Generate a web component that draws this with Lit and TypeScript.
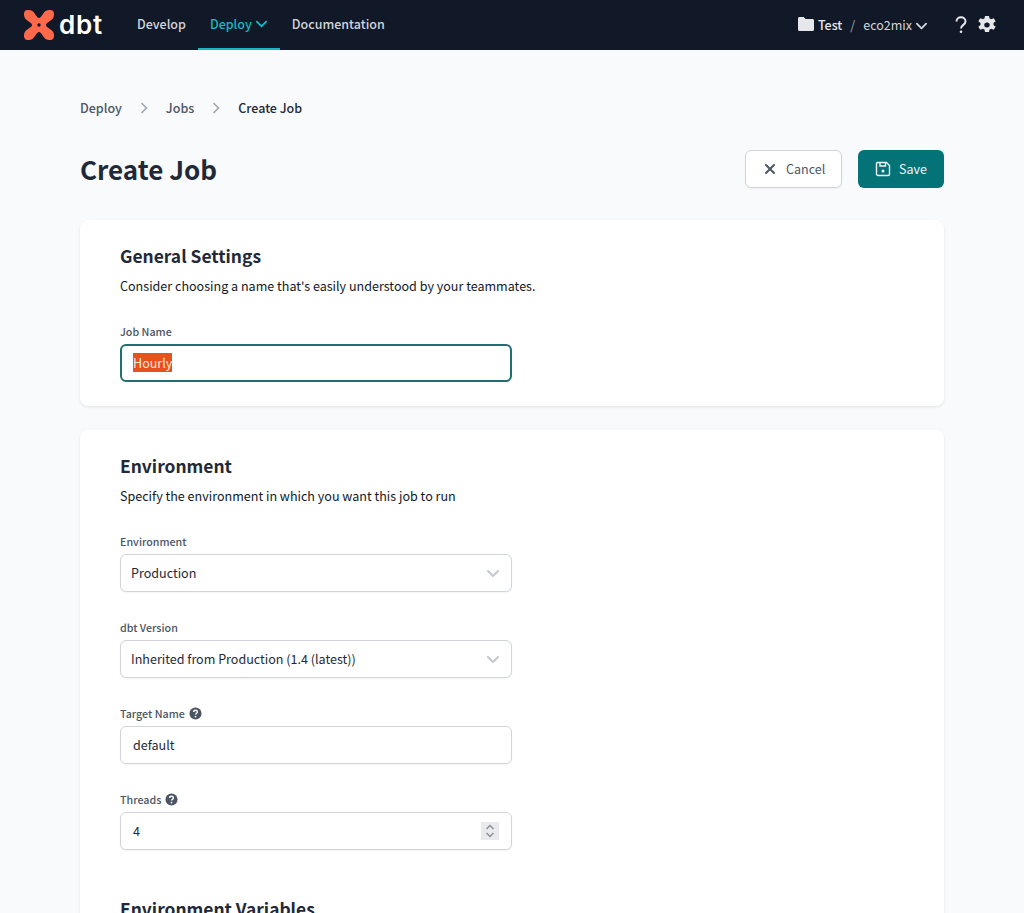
import { LitElement, html, css, svg } from 'lit';
import { customElement } from 'lit/decorators.js';

const chevronDown = svg`<path d="M2 5l5 5 5-5" fill="none" stroke="currentColor" stroke-width="2" stroke-linecap="round" stroke-linejoin="round"/>`;

const crumbChevron = html`<svg viewBox="0 0 8 12"><path d="M1.500 1l5 5-5 5" fill="none" stroke="currentColor" stroke-width="1.500"/></svg>`;

const helpDot = html`<svg class="help-dot" viewBox="0 0 14 14" width="13" height="13">
  <circle cx="7" cy="7" r="6.5" fill="#4b5563"/>
  <path d="M5 5.400C5 4.200 5.900 3.500 7 3.500s2 .7 2 1.800c0 1.500-2 1.500-2 2.900" fill="none" stroke="#fff" stroke-width="1.500"/>
  <circle cx="7" cy="10.300" r=".95" fill="#fff"/>
</svg>`;

@customElement('app-root')
export class AppRoot extends LitElement {
  static styles = css`
    :host {
      display: block;
      height: 913px;
      overflow: hidden;
      background: #f9fafb;
      font-family: 'Noto Sans CJK SC', 'Noto Sans', sans-serif;
      color: #111827;
    }
    .nav {
      height: 50px;
      background: #111827;
      display: flex;
      align-items: stretch;
      padding: 0 24px;
      box-sizing: border-box;
    }
    .brand {
      display: flex;
      align-items: center;
      gap: 5px;
      width: 101px;
    }
    .brand-text {
      color: #fff;
      font-family: 'Inter', sans-serif;
      font-weight: 600;
      font-size: 26px;
      letter-spacing: 0.8px;
      line-height: 30px;
      margin-top: -1px;
    }
    .links {
      display: flex;
    }
    .link {
      display: flex;
      align-items: center;
      gap: 3px;
      padding: 0 12px 2px;
      font-size: 12.5px;
      font-weight: 500;
      color: #d1d5db;
      box-sizing: border-box;
      border-bottom: 2px solid transparent;
    }
    .link.active {
      color: #14b8c4;
      border-bottom-color: #14b8c4;
    }
    .link svg {
      width: 13px;
      height: 13px;
    }
    .right {
      margin-left: auto;
      display: flex;
      align-items: center;
      color: #e5e7eb;
      font-size: 12.5px;
    }
    .right span {
      margin-bottom: 2px;
    }
    .folder {
      width: 16px;
      height: 14px;
      margin-right: 4px;
      margin-bottom: 2px;
    }
    .project {
      font-weight: 500;
    }
    .slash {
      margin: 0 8px;
      color: #9ca3af;
    }
    .repo {
      color: #d1d5db;
    }
    .repo-chevron {
      width: 13px;
      height: 13px;
      margin-left: 3px;
      color: #d1d5db;
    }
    .help {
      width: 12px;
      height: 18px;
      margin-left: 27px;
    }
    .gear {
      width: 18px;
      height: 18px;
      margin-left: 11px;
      margin-right: 4px;
    }
    .main {
      padding: 48px 80px 0;
    }
    .crumbs {
      display: flex;
      align-items: center;
      height: 20px;
      font-size: 12.5px;
      font-weight: 500;
      color: #4b5563;
    }
    .crumbs span {
      margin-bottom: 2px;
    }
    .crumbs svg {
      width: 8px;
      height: 12px;
      margin: 0 18px;
      color: #9ca3af;
    }
    .crumbs .current {
      color: #1f2937;
    }
    .head {
      display: flex;
      align-items: center;
      justify-content: space-between;
      margin-top: 32px;
      margin-bottom: 32px;
    }
    h1 {
      margin: 0;
      font-size: 26px;
      line-height: 38px;
      font-weight: 700;
      color: #1f2937;
    }
    .actions {
      display: flex;
      gap: 16px;
    }
    .btn {
      height: 38px;
      box-sizing: border-box;
      border-radius: 6px;
      display: flex;
      align-items: center;
      font-size: 12.5px;
    }
    .btn span {
      margin-bottom: 2px;
    }
    .btn svg {
      flex-shrink: 0;
    }
    .cancel {
      width: 97px;
      padding-left: 18px;
      gap: 10px;
      background: #fff;
      border: 1px solid #d1d5db;
      color: #4b5563;
      box-shadow: 0 1px 2px rgba(0, 0, 0, 0.05);
    }
    .save {
      width: 86px;
      padding-left: 17px;
      gap: 8px;
      background: #047377;
      color: #f3f4f6;
    }
    .card {
      background: #fff;
      border-radius: 8px;
      box-shadow: 0 1px 3px rgba(0, 0, 0, 0.1);
      padding: 24px 40px;
      margin-bottom: 24px;
    }
    h2 {
      margin: 0;
      font-size: 17.4px;
      line-height: 24px;
      font-weight: 700;
      color: #1f2937;
    }
    .desc {
      margin: 8px 0 0;
      font-size: 12.55px;
      line-height: 20px;
      color: #111827;
    }
    .field {
      width: 392px;
      margin-top: 28px;
    }
    .label {
      display: flex;
      align-items: center;
      gap: 4px;
      height: 16px;
      box-sizing: border-box;
      padding-bottom: 2px;
      font-size: 10.7px;
      font-weight: 500;
      color: #4b5563;
      margin-bottom: 4px;
    }
    .help-dot {
      display: block;
    }
    .input {
      height: 38px;
      box-sizing: border-box;
      border: 1px solid #d1d5db;
      border-radius: 6px;
      background: #fff;
      display: flex;
      align-items: center;
      justify-content: space-between;
      padding: 0 12px;
      font-size: 12.55px;
      color: #1f2937;
      box-shadow: 0 1px 2px rgba(0, 0, 0, 0.05);
    }
    .input span {
      margin-bottom: 2px;
    }
    .input.select {
      padding: 0 11px 0 10px;
    }
    .input.select svg {
      width: 14px;
      height: 14px;
      color: #c4c7cc;
    }
    .input.focus {
      border: 2px solid #1f6f73;
      box-shadow: none;
      padding: 0 11px;
    }
    .selected {
      background: #e8501f;
      color: #fde8df;
    }
    .spin {
      width: 18px;
      height: 18px;
      background: #e9eaee;
      display: block;
    }
    .sub {
      margin-top: 47px;
    }
  `;

  render() {
    return html`
      <div class="nav">
        <div class="brand">
          <svg width="30" height="30" viewBox="0 0 30 30">
            <path fill="#ff694a" d="M1 1C2.500-.4 5.500-.3 8 .8 11 2.500 12.500 8 15 8S19 2.500 22 .8C24.500-.3 27.500-.4 29 1c1.400 1.500 1.300 4.500.2 7C27.500 11 22 12.500 22 15s5.500 4 7.200 7c1.100 2.500 1.200 5.500-.2 7-1.500 1.400-4.500 1.300-7 .2C19 27.500 17.500 22 15 22s-4 5.500-7 7.200C5.500 30.300 2.500 30.400 1 29c-1.400-1.500-1.300-4.500-.2-7C2.500 19 8 17.500 8 15S2.500 11 .8 8C-.3 5.500-.4 2.500 1 1z"/>
            <circle cx="15" cy="15" r="1.700" fill="#111827"/>
          </svg>
          <span class="brand-text">dbt</span>
        </div>
        <div class="links">
          <div class="link">Develop</div>
          <div class="link active">Deploy <svg viewBox="0 0 14 14">${chevronDown}</svg></div>
          <div class="link">Documentation</div>
        </div>
        <div class="right">
          <svg class="folder" viewBox="0 0 16 14"><path fill="#e5e7eb" d="M1.500 0h4.300l1.700 2h7c.8 0 1.500.7 1.500 1.500v9c0 .8-.7 1.500-1.500 1.500h-13C.7 14 0 13.300 0 12.500v-11C0 .7.7 0 1.500 0z"/></svg>
          <span class="project">Test</span>
          <span class="slash">/</span>
          <span class="repo">eco2mix</span>
          <svg class="repo-chevron" viewBox="0 0 14 14">${chevronDown}</svg>
          <svg class="help" viewBox="0 0 12 18"><path d="M1.500 5.500C1.500 3 3.500 1.200 6 1.200s4.500 1.800 4.500 4.200c0 3.400-4.500 3.600-4.500 7.100" fill="none" stroke="#e5e7eb" stroke-width="2"/><circle cx="6" cy="15.800" r="1.300" fill="#e5e7eb"/></svg>
          <svg class="gear" viewBox="1.800 1 16.400 18" preserveAspectRatio="none"><path fill="#e5e7eb" fill-rule="evenodd" d="M8.200 0h3.600l.5 2.600c.5.200 1 .4 1.400.7l2.400-1.100 1.800 3.100-2 1.700c.1.700.1 1.300 0 2l2 1.700-1.800 3.100-2.400-1.100c-.4.300-.9.500-1.400.7l-.5 2.600H8.200l-.5-2.600c-.5-.2-1-.4-1.400-.7l-2.400 1.100-1.800-3.100 2-1.700c-.1-.7-.1-1.300 0-2l-2-1.700 1.800-3.100 2.400 1.100c.4-.3.900-.5 1.400-.7zM10 6.500a2.500 2.500 0 100 5 2.500 2.500 0 000-5z" transform="translate(0 1)"/></svg>
        </div>
      </div>
      <div class="main">
        <div class="crumbs">
          <span>Deploy</span>
          ${crumbChevron}
          <span>Jobs</span>
          ${crumbChevron}
          <span class="current">Create Job</span>
        </div>
        <div class="head">
          <h1>Create Job</h1>
          <div class="actions">
            <div class="btn cancel">
              <svg width="12" height="12" viewBox="0 0 12 12"><path d="M2 2l8 8M10 2l-8 8" stroke="currentColor" stroke-width="2" stroke-linecap="round"/></svg>
              <span>Cancel</span>
            </div>
            <div class="btn save">
              <svg width="16" height="16" viewBox="0 0 16 16"><path d="M2.500 1.500h9l3 3v8.500a1.500 1.500 0 01-1.500 1.500H3A1.500 1.500 0 011.500 13V2.500a1 1 0 011-1z" fill="none" stroke="currentColor" stroke-width="1.400"/><path d="M5 1.500v3.500h5.500V1.500" fill="none" stroke="currentColor" stroke-width="1.400"/><circle cx="8" cy="10" r="1.500" fill="currentColor"/></svg>
              <span>Save</span>
            </div>
          </div>
        </div>
        <div class="card">
          <h2>General Settings</h2>
          <p class="desc">Consider choosing a name that's easily understood by your teammates.</p>
          <div class="field">
            <div class="label">Job Name</div>
            <div class="input focus"><span class="selected">Hourly</span></div>
          </div>
        </div>
        <div class="card">
          <h2>Environment</h2>
          <p class="desc">Specify the environment in which you want this job to run</p>
          <div class="field">
            <div class="label">Environment</div>
            <div class="input select"><span>Production</span><svg viewBox="0 0 14 14">${chevronDown}</svg></div>
          </div>
          <div class="field">
            <div class="label">dbt Version</div>
            <div class="input select"><span>Inherited from Production (1.4 (latest))</span><svg viewBox="0 0 14 14">${chevronDown}</svg></div>
          </div>
          <div class="field">
            <div class="label">Target Name ${helpDot}</div>
            <div class="input"><span>default</span></div>
          </div>
          <div class="field">
            <div class="label">Threads ${helpDot}</div>
            <div class="input">
              <span>4</span>
              <svg class="spin" viewBox="0 0 18 18"><path d="M5.500 7L9 3.500 12.500 7M5.500 11L9 14.500 12.500 11" fill="none" stroke="#8b8f98" stroke-width="1.500"/></svg>
            </div>
          </div>
          <h2 class="sub">Environment Variables</h2>
        </div>
      </div>
    `;
  }
}
